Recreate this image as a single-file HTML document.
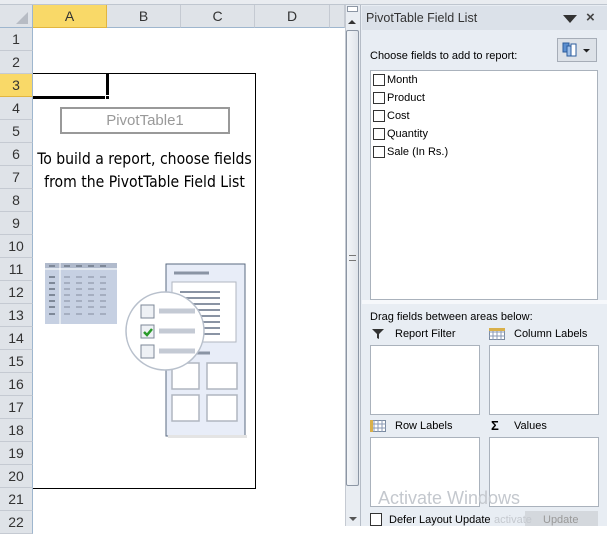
<!DOCTYPE html>
<html><head><meta charset="utf-8">
<style>
*{box-sizing:border-box;margin:0;padding:0}
body{width:607px;height:526px;overflow:hidden;background:#fff;font-family:"Liberation Sans",sans-serif;position:relative}
.abs{position:absolute}
.rown{position:absolute;left:0;width:33px;height:23px;border-bottom:1px solid #c5cad2;border-right:1px solid #9eb6ce;background:#dfe3e8;font-size:14px;color:#333;text-align:center;line-height:23px}
.col{position:absolute;top:5px;height:23px;border-right:1px solid #c5cad2;border-bottom:1px solid #9eb6ce;background:#dfe3e8;font-size:14px;color:#333;text-align:center;line-height:23px}
.fld{font-size:11px;color:#000;height:18px;line-height:18px;display:flex;align-items:center}
.cb{width:12px;height:12px;border:1px solid #333;background:#fff;margin-right:2px}
.area{position:absolute;background:#fff;border:1px solid #aab2bc}
.lbl{position:absolute;font-size:11px;color:#000}
</style></head><body>
<div class="abs" style="left:0;top:0;width:607px;height:5px;background:#e9ecf0;border-bottom:1px solid #bfc6cf"></div>
<div class="abs" style="left:0;top:5px;width:33px;height:23px;background:#dfe3e8;border-right:1px solid #9eb6ce;border-bottom:1px solid #9eb6ce"></div>
<div class="abs" style="left:16px;top:12px;width:0;height:0;border-left:12px solid transparent;border-bottom:12px solid #b7bcc4"></div>
<div class="col" style="left:33px;width:74px;background:#f9d968;border-color:#e2b640;">A</div>
<div class="col" style="left:107px;width:74px">B</div>
<div class="col" style="left:181px;width:74px">C</div>
<div class="col" style="left:255px;width:75px">D</div>
<div class="col" style="left:330px;width:15px"></div>
<div id="rows"></div>
<script>
var h='';for(var i=1;i<=22;i++){var t=28+(i-1)*23;h+='<div class="rown" style="top:'+t+'px;'+(i==3?'background:#f9d968;border-bottom-color:#e2b640':'')+'">'+i+'</div>';}
document.getElementById('rows').innerHTML=h;
</script>
<div class="abs" style="left:33px;top:73px;width:223px;height:416px;border:1px solid #000;border-left:none"></div>
<div class="abs" style="left:33px;top:73px;width:76px;height:26px;border:3px solid #000;border-left:none;border-top:1px solid #000"></div>
<div class="abs" style="left:105px;top:95px;width:5px;height:5px;background:#000;border:1px solid #fff"></div>
<div class="abs" style="left:60px;top:107px;width:170px;height:27px;border:2px solid #999;color:#999;font-size:15px;text-align:center;line-height:23px">PivotTable1</div>
<div class="abs" style="left:30px;top:148px;width:229px;text-align:center;font-size:15.6px;line-height:23px;color:#000;font-family:'DejaVu Sans Condensed','Liberation Sans',sans-serif">To build a report, choose fields<br>from the PivotTable Field List</div>
<svg class="abs" style="left:40px;top:258px" width="210" height="185">
<rect x="5" y="5" width="72" height="61" fill="#c6d0e2"/>
<rect x="5" y="5" width="72" height="5" fill="#b0bacc"/>
<line x1="5" y1="11" x2="77" y2="11" stroke="#fff"/>
<line x1="20" y1="5" x2="20" y2="66" stroke="#fff"/>
<g stroke="#7e8898" stroke-width="2">
<path d="M9 8h6M24 8h6M36 8h6M48 8h6M60 8h6"/>
<path d="M9 19h6M9 25h6M9 31h6M9 37h6M9 43h6M9 49h6M9 56h6"/></g>
<g stroke="#9aa2b4" stroke-width="1.5">
<path d="M24 19h6M36 19h6M48 19h6M60 19h6M24 25h6M36 25h6M48 25h6M60 25h6M24 31h6M36 31h6M48 31h6M60 31h6M24 37h6M36 37h6M48 37h6M60 37h6M24 43h6M36 43h6M48 43h6M60 43h6M24 49h6M36 49h6M48 49h6M60 49h6M24 56h6M36 56h6M48 56h6M60 56h6"/></g>
<rect x="126" y="6" width="79" height="172" fill="#e8edf8" stroke="#5a6a80"/>
<rect x="128" y="177" width="79" height="3" fill="#e4e4e4"/>
<path d="M134 15h35" stroke="#8a94a4" stroke-width="3"/>
<rect x="132" y="24" width="64" height="60" fill="#fff" stroke="#b0b6c0"/>
<g stroke="#8a94a4" stroke-width="2"><path d="M140 34h40M140 40h40M140 46h40M140 52h40M140 58h40M140 64h40M140 70h40M140 76h40"/></g>
<path d="M134 95h36" stroke="#8a94a4" stroke-width="3"/>
<rect x="132" y="105" width="27" height="26" fill="#fff" stroke="#b0b6c0" stroke-width="1.5"/>
<rect x="167" y="105" width="30" height="26" fill="#fff" stroke="#b0b6c0" stroke-width="1.5"/>
<rect x="132" y="137" width="27" height="26" fill="#fff" stroke="#b0b6c0" stroke-width="1.5"/>
<rect x="167" y="137" width="30" height="26" fill="#fff" stroke="#b0b6c0" stroke-width="1.5"/>
<circle cx="125" cy="73" r="39" fill="#fff" stroke="#b8c0cc" stroke-width="1.5"/>
<rect x="101" y="47" width="13" height="13" fill="#eef1f5" stroke="#7d8898"/>
<rect x="101" y="67" width="13" height="13" fill="#eef1f5" stroke="#7d8898"/>
<rect x="101" y="87" width="13" height="13" fill="#eef1f5" stroke="#7d8898"/>
<path d="M104 74l3 3 5-6" stroke="#2a9a2a" stroke-width="2.5" fill="none"/>
<path d="M119 53h36M119 73h36M119 93h36" stroke="#c4cad4" stroke-width="5"/>
</svg>
<div class="abs" style="left:345px;top:5px;width:15px;height:521px;background:#e9edf2;border-left:1px solid #c5cad2"></div>
<div class="abs" style="left:347px;top:6px;width:11px;height:6px;border:1px solid #8c96a4;background:#fff"></div>
<div class="abs" style="left:348px;top:20px;width:0;height:0;border-left:4px solid transparent;border-right:4px solid transparent;border-bottom:4px solid #333"></div>
<div class="abs" style="left:346px;top:30px;width:13px;height:456px;border:1px solid #8c96a4;border-radius:2px;background:linear-gradient(90deg,#f4f6f9,#dfe4ea)"></div>
<div class="abs" style="left:349px;top:255px;width:7px;height:6px;border-top:1px solid #777;border-bottom:1px solid #777"></div>
<div class="abs" style="left:349px;top:517px;width:0;height:0;border-left:4px solid transparent;border-right:4px solid transparent;border-top:4px solid #555"></div>
<div class="abs" style="left:360px;top:5px;width:247px;height:521px;background:#e8edf3;border-left:1px solid #b5bcc6"></div>
<div class="abs" style="left:362px;top:6px;width:245px;height:24px;background:#dbe1e9"></div>
<div class="abs" style="left:366px;top:11px;font-size:12.5px;color:#333">PivotTable Field List</div>
<div class="abs" style="left:563px;top:15px;width:0;height:0;border-left:7px solid transparent;border-right:7px solid transparent;border-top:8px solid #333"></div>
<div class="abs" style="left:586px;top:9px;font-size:15px;color:#444;font-weight:bold">×</div>
<div class="abs" style="left:557px;top:38px;width:40px;height:24px;border:1px solid #a6adb7;background:#dde2e8"></div>
<svg class="abs" style="left:560px;top:41px" width="34" height="18"><rect x="3" y="2" width="6" height="9" fill="#5c8fd0" stroke="#2c5c9c"/><rect x="7" y="5" width="6" height="10" fill="#9ec0ea" stroke="#2c5c9c"/><rect x="11" y="3" width="5" height="12" fill="#fff" stroke="#2c5c9c"/><path d="M23 8h7l-3.5 3.5z" fill="#222"/></svg>
<div class="abs" style="left:370px;top:50px;font-size:11px;color:#000">Choose fields to add to report:</div>
<div class="abs" style="left:370px;top:70px;width:228px;height:230px;background:#fff;border:1px solid #aab2bc;padding:0 0 0 2px">
<div class="fld"><div class="cb"></div>Month</div>
<div class="fld"><div class="cb"></div>Product</div>
<div class="fld"><div class="cb"></div>Cost</div>
<div class="fld"><div class="cb"></div>Quantity</div>
<div class="fld"><div class="cb"></div>Sale (In Rs.)</div>
</div>
<div class="abs" style="left:362px;top:300px;width:245px;height:4px;background:#f6f8fb"></div>
<div class="lbl" style="left:370px;top:311px">Drag fields between areas below:</div>
<svg class="abs" style="left:371px;top:328px" width="14" height="12"><path d="M1 1h12l-5 5v5l-2-1v-4z" fill="#333"/></svg>
<div class="lbl" style="left:395px;top:328px">Report Filter</div>
<svg class="abs" style="left:489px;top:328px" width="16" height="12"><rect x="0.5" y="0.5" width="15" height="11" fill="#fff" stroke="#7a8aa0"/><path d="M0 4h16M0 8h16M4 0v12M8 0v12M12 0v12" stroke="#8a9ab4"/><rect x="0" y="0" width="16" height="3" fill="#d9b04a"/></svg>
<div class="lbl" style="left:514px;top:328px">Column Labels</div>
<div class="area" style="left:370px;top:345px;width:110px;height:70px"></div>
<div class="area" style="left:489px;top:345px;width:110px;height:70px"></div>
<svg class="abs" style="left:370px;top:420px" width="16" height="12"><rect x="0.5" y="0.5" width="15" height="11" fill="#fff" stroke="#7a8aa0"/><path d="M0 4h16M0 8h16M4 0v12M8 0v12M12 0v12" stroke="#8a9ab4"/><rect x="0" y="0" width="3" height="12" fill="#d9b04a"/></svg>
<div class="lbl" style="left:395px;top:420px">Row Labels</div>
<div class="lbl" style="left:491px;top:418px;font-size:13px;font-weight:bold">Σ</div>
<div class="lbl" style="left:514px;top:420px">Values</div>
<div class="area" style="left:370px;top:437px;width:110px;height:70px"></div>
<div class="area" style="left:489px;top:437px;width:110px;height:70px"></div>
<div class="abs" style="left:378px;top:488px;font-size:18px;color:#c4c8ce">Activate Windows</div>
<div class="abs" style="left:370px;top:513px;width:12px;height:13px;border:1px solid #333;background:#fff"></div>
<div class="abs" style="left:525px;top:511px;width:73px;height:15px;background:#d4d8dd"></div>
<div class="lbl" style="left:389px;top:514px">Defer Layout Update</div>
<div class="lbl" style="left:494px;top:514px;color:#c4c8ce">activate</div>
<div class="lbl" style="left:543px;top:514px;color:#999">Update</div>
</body></html>
